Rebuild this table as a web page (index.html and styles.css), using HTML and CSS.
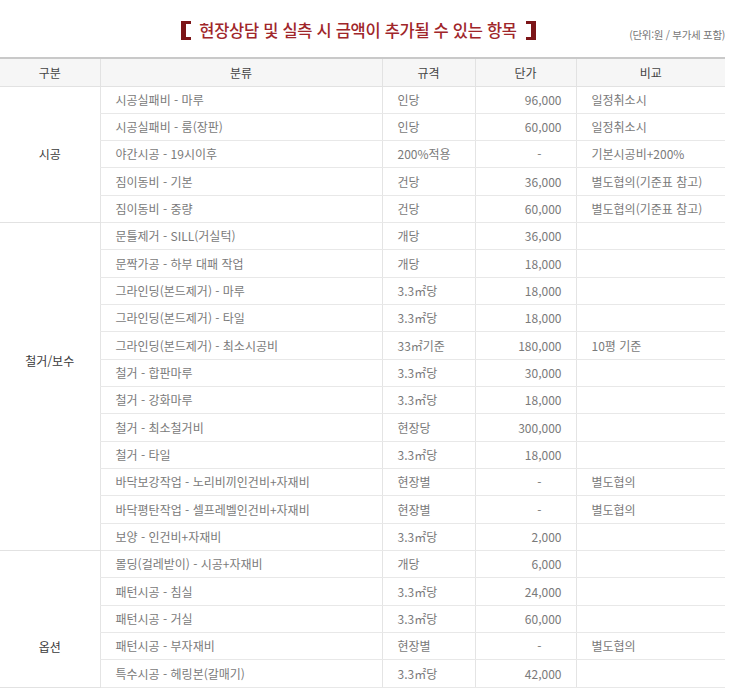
FILE: index.html
```html
<!DOCTYPE html>
<html lang="ko">
<head>
<meta charset="utf-8">
<title>추가 항목</title>
<link rel="stylesheet" href="styles.css">
</head>
<body>
<div class="wrap">
  <div class="heading">
    <div class="spacer"></div>
    <h2 class="title"><span class="br br-l"></span><span class="title-text">현장상담 및 실측 시 금액이 추가될 수 있는 항목</span><span class="br br-r"></span></h2>
    <div class="note">(단위:원 / 부가세 포함)</div>
  </div>
  <table class="price">
    <colgroup>
      <col class="c1"><col class="c2"><col class="c3"><col class="c4"><col class="c5">
    </colgroup>
    <thead>
      <tr><th>구분</th><th>분류</th><th>규격</th><th>단가</th><th>비교</th></tr>
    </thead>
    <tbody>
      <tr class="grp"><td class="label" rowspan="5">시공</td><td>시공실패비 - 마루</td><td>인당</td><td class="num">96,000</td><td>일정취소시</td></tr>
      <tr><td>시공실패비 - 룸(장판)</td><td>인당</td><td class="num">60,000</td><td>일정취소시</td></tr>
      <tr><td>야간시공 - 19시이후</td><td>200%적용</td><td class="num dash">-</td><td>기본시공비+200%</td></tr>
      <tr><td>짐이동비 - 기본</td><td>건당</td><td class="num">36,000</td><td>별도협의(기준표 참고)</td></tr>
      <tr><td>짐이동비 - 중량</td><td>건당</td><td class="num">60,000</td><td>별도협의(기준표 참고)</td></tr>

      <tr class="grp"><td class="label label-demo" rowspan="12">철거/보수</td><td>문틀제거 - SILL(거실턱)</td><td>개당</td><td class="num">36,000</td><td></td></tr>
      <tr><td>문짝가공 - 하부 대패 작업</td><td>개당</td><td class="num">18,000</td><td></td></tr>
      <tr><td>그라인딩(본드제거) - 마루</td><td>3.3㎡당</td><td class="num">18,000</td><td></td></tr>
      <tr><td>그라인딩(본드제거) - 타일</td><td>3.3㎡당</td><td class="num">18,000</td><td></td></tr>
      <tr><td>그라인딩(본드제거) - 최소시공비</td><td>33㎡기준</td><td class="num">180,000</td><td>10평 기준</td></tr>
      <tr><td>철거 - 합판마루</td><td>3.3㎡당</td><td class="num">30,000</td><td></td></tr>
      <tr><td>철거 - 강화마루</td><td>3.3㎡당</td><td class="num">18,000</td><td></td></tr>
      <tr><td>철거 - 최소철거비</td><td>현장당</td><td class="num">300,000</td><td></td></tr>
      <tr><td>철거 - 타일</td><td>3.3㎡당</td><td class="num">18,000</td><td></td></tr>
      <tr><td>바닥보강작업 - 노리비끼인건비+자재비</td><td>현장별</td><td class="num dash">-</td><td>별도협의</td></tr>
      <tr><td>바닥평탄작업 - 셀프레벨인건비+자재비</td><td>현장별</td><td class="num dash">-</td><td>별도협의</td></tr>
      <tr><td>보양 - 인건비+자재비</td><td>3.3㎡당</td><td class="num">2,000</td><td></td></tr>

      <tr class="grp"><td class="label label-opt" rowspan="5">옵션</td><td>몰딩(걸레받이) - 시공+자재비</td><td>개당</td><td class="num">6,000</td><td></td></tr>
      <tr><td>패턴시공 - 침실</td><td>3.3㎡당</td><td class="num">24,000</td><td></td></tr>
      <tr><td>패턴시공 - 거실</td><td>3.3㎡당</td><td class="num">60,000</td><td></td></tr>
      <tr><td>패턴시공 - 부자재비</td><td>현장별</td><td class="num dash">-</td><td>별도협의</td></tr>
      <tr><td>특수시공 - 헤링본(갈매기)</td><td>3.3㎡당</td><td class="num">42,000</td><td></td></tr>
    </tbody>
  </table>
</div>
</body>
</html>
```

FILE: styles.css
```css
html, body {
  margin: 0;
  padding: 0;
  background: #ffffff;
}
body {
  font-family: "Noto Sans CJK KR", "Noto Sans", sans-serif;
  color: #7a7a7a;
}
.wrap {
  width: 725px;
}
.heading {
  height: 57px;
  display: grid;
  grid-template-columns: 1fr auto 1fr;
  align-items: start;
}
.title {
  margin: 0;
  padding-top: 19px;
  display: flex;
  align-items: center;
  font-size: 16.5px;
  font-weight: 500;
  line-height: 22px;
  color: #a0262a;
  letter-spacing: -0.3px;
  transform: translateX(-4px);
}
.title-text {
  margin: 0 9px 0 8px;
}
.br {
  display: inline-block;
  width: 5px;
  height: 13px;
  border-top: 3px solid #7c1518;
  border-bottom: 3px solid #7c1518;
}
.br-l {
  border-left: 5px solid #7c1518;
}
.br-r {
  border-right: 5px solid #7c1518;
}
.note {
  justify-self: end;
  padding-top: 27px;
  font-size: 10.5px;
  line-height: 15px;
  color: #777;
  letter-spacing: -0.3px;
  white-space: nowrap;
}
.price {
  width: 725px;
  border-collapse: collapse;
  table-layout: fixed;
  font-size: 12px;
}
.c1 { width: 100px; }
.c2 { width: 282px; }
.c3 { width: 93px; }
.c4 { width: 101px; }
.c5 { width: 149px; }
.price th {
  height: 28px;
  box-sizing: border-box;
  padding: 0;
  background: #f6f6f6;
  border-top: 2px solid #c9c9c9;
  border-bottom: 1px solid #e2e2e2;
  border-left: 1px solid #e2e2e2;
  font-weight: normal;
  color: #444;
  text-align: center;
}
.price th:first-child {
  border-left: none;
}
.price td {
  height: 27.33px;
  box-sizing: border-box;
  padding: 0 14px 0 15px;
  border-bottom: 1px solid #e8e8e8;
  border-left: 1px solid #e4e4e4;
  white-space: nowrap;
  line-height: 16px;
}
.price td.label {
  border-left: none;
  text-align: center;
  color: #3a3a3a;
  padding: 0;
  border-bottom: 1px solid #e2e2e2;
}
.price td.label-demo {
  vertical-align: top;
  padding-top: 130px;
}
.price td.label-opt {
  vertical-align: top;
  padding-top: 88px;
}
.price td.num {
  text-align: right;
}
.price td.dash {
  padding-right: 34px;
}
```
